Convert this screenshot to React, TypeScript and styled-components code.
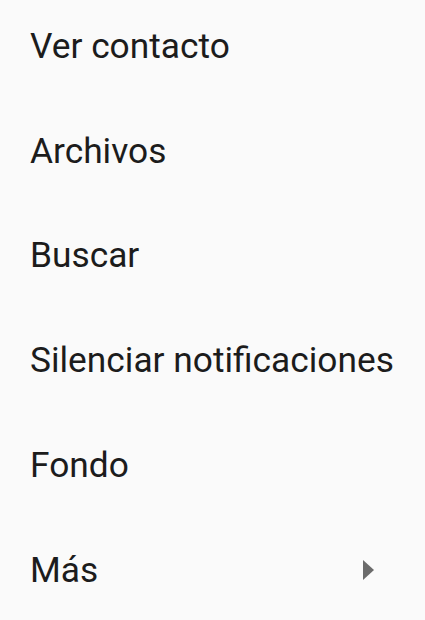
import React from 'react';
import styled, { createGlobalStyle } from 'styled-components';

const GlobalStyle = createGlobalStyle`
  html, body {
    margin: 0;
    padding: 0;
    background: #fafafa;
  }
  body {
    font-family: Roboto, 'Noto Sans', sans-serif;
    overflow: hidden;
  }
`;

const Menu = styled.ul`
  list-style: none;
  margin: -6px 0 0;
  padding: 0;
  width: 425px;
  height: 628px;
  background: #fafafa;
`;

const Item = styled.li`
  display: flex;
  align-items: center;
  justify-content: space-between;
  height: 104.8px;
  padding: 0 51px 0 30px;
  box-sizing: border-box;
`;

const Label = styled.span`
  font-size: 35.3px;
  line-height: 1;
  color: #1c1c1c;
  white-space: nowrap;
`;

const Arrow = styled.span`
  flex: none;
  width: 0;
  height: 0;
  border-top: 10.5px solid transparent;
  border-bottom: 10.5px solid transparent;
  border-left: 11px solid #6b6b6b;
`;

const items = [
  { label: 'Ver contacto' },
  { label: 'Archivos' },
  { label: 'Buscar' },
  { label: 'Silenciar notificaciones' },
  { label: 'Fondo' },
  { label: 'Más', sub: true },
];

export default function App() {
  return (
    <>
      <GlobalStyle />
      <Menu>
        {items.map((item) => (
          <Item key={item.label}>
            <Label>{item.label}</Label>
            {item.sub && <Arrow />}
          </Item>
        ))}
      </Menu>
    </>
  );
}
